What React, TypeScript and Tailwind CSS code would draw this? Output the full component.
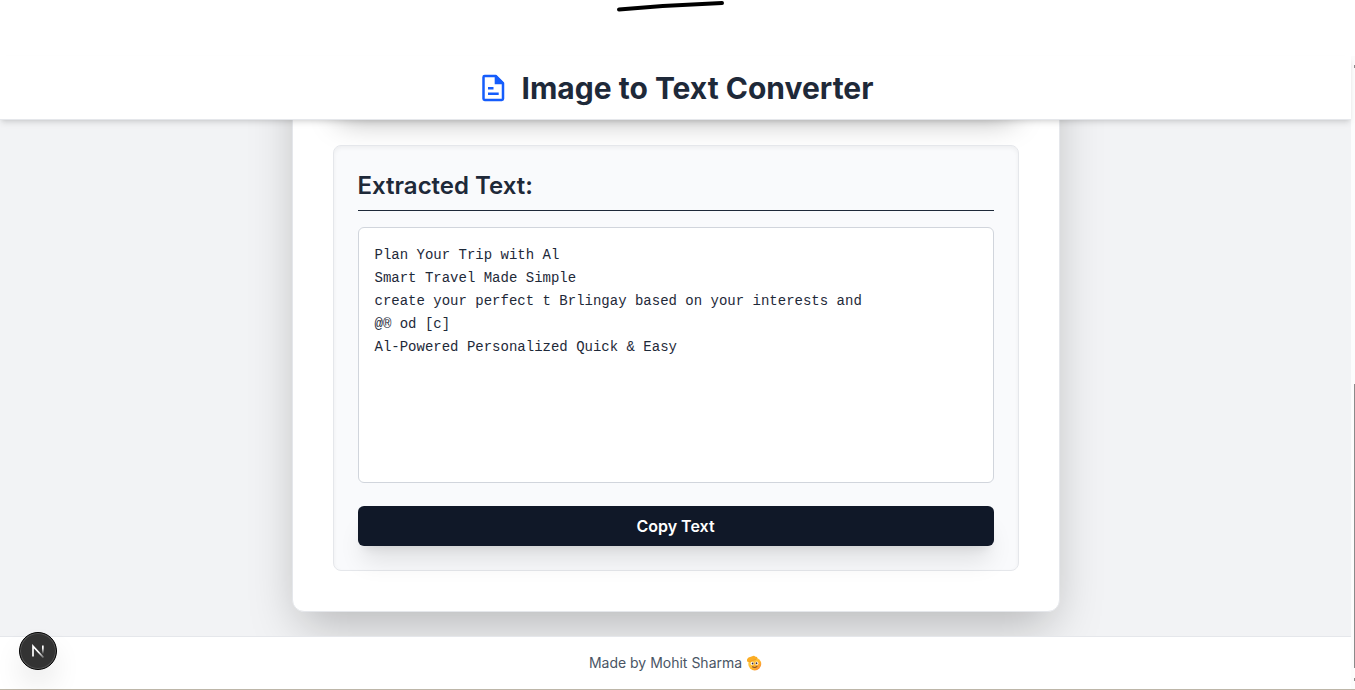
import React, { useState } from "react";

const EXTRACTED = [
  "Plan Your Trip with Al",
  "Smart Travel Made Simple",
  "create your perfect t Brlingay based on your interests and",
  "@® od [c]",
  "Al-Powered Personalized Quick & Easy",
].join("\n");

function DocumentIcon() {
  return (
    <svg width="24" height="28" viewBox="0 0 24 28" aria-hidden="true" className="shrink-0">
      <path
        d="M2.7 2H13.7L21 9.2V24.8Q21 26 19.8 26H2.7Q1.5 26 1.5 24.8V3.2Q1.5 2 2.7 2Z"
        fill="none"
        stroke="#155dfc"
        strokeWidth="2.5"
        strokeLinejoin="round"
      />
      <path d="M12.7 1.5H14.3L21.5 8.8V10.2H12.7Z" fill="#155dfc" />
      <path d="M6 14.2H11.5M6 19.7H16.7" stroke="#155dfc" strokeWidth="2.4" />
    </svg>
  );
}

function SaluteEmoji() {
  return (
    <svg width="16" height="16" viewBox="0 0 32 32" role="img" aria-label="Saluting face">
      <defs>
        <linearGradient id="face" x1="0" y1="0" x2="1" y2="1">
          <stop offset="0" stopColor="#ffd84f" />
          <stop offset="0.6" stopColor="#ffb52e" />
          <stop offset="1" stopColor="#f57c3c" />
        </linearGradient>
      </defs>
      <circle cx="17.5" cy="18" r="13" fill="url(#face)" />
      <path d="M2 12Q1 7 5 5L14 2Q17 1 18 3L22 4Q24 6 21 8L11 12Q7 15 3 13.5Z" fill="#fbad24" />
      <path d="M6 14Q13 11 21 8.5" stroke="#e78a22" strokeWidth="1.2" fill="none" />
      <ellipse cx="12.5" cy="17" rx="3.2" ry="3.4" fill="#fff" />
      <ellipse cx="21.5" cy="16.5" rx="3.2" ry="3.4" fill="#fff" />
      <circle cx="13.2" cy="17" r="1.8" fill="#402a32" />
      <circle cx="21" cy="16.5" r="1.8" fill="#402a32" />
      <path d="M13 24Q18 26.5 22 23.5" stroke="#6b3a2c" strokeWidth="2" fill="none" strokeLinecap="round" />
    </svg>
  );
}

function DevBadge() {
  return (
    <button
      type="button"
      aria-label="Open developer tools"
      className="fixed bottom-5 left-[19px] z-20 flex size-[38px] items-center justify-center rounded-full border border-black bg-[#333333] shadow-[inset_0_0_0_1px_#555555,0_16px_32px_-8px_rgba(0,0,0,0.24)]"
    >
      <svg width="14" height="14" viewBox="0 0 14 14" fill="none" aria-hidden="true">
        <defs>
          <linearGradient id="stem" x1="0" y1="0" x2="0" y2="1">
            <stop offset="0.3" stopColor="#fff" />
            <stop offset="1" stopColor="#fff" stopOpacity="0" />
          </linearGradient>
          <linearGradient id="diagonal" gradientUnits="userSpaceOnUse" x1="8" y1="8" x2="13" y2="14">
            <stop offset="0" stopColor="#fff" />
            <stop offset="1" stopColor="#fff" stopOpacity="0.2" />
          </linearGradient>
        </defs>
        <path d="M2 12.5V2.2L12.5 13.5" stroke="url(#diagonal)" strokeWidth="1.7" />
        <rect x="11" y="1.5" width="1.7" height="8.5" fill="url(#stem)" />
      </svg>
    </button>
  );
}

function ScrollRail() {
  return (
    <div aria-hidden="true" className="flex w-1 shrink-0 flex-col items-end bg-[#fcfcfc] pt-[9px] pb-2">
      <span className="h-[3px] w-px bg-[#8b8b8b]" />
      <span className="grow" />
      <span className="h-[284px] w-px bg-[#8b8b8b]" />
      <span className="mt-[10px] h-[3px] w-px bg-[#8b8b8b]" />
    </div>
  );
}

export default function App() {
  const [text, setText] = useState(EXTRACTED);

  return (
    <div className="flex min-h-screen flex-col border-b border-[#bdb6a8] bg-white font-[Inter,sans-serif]">
      <div className="flex h-14 shrink-0 justify-center pr-4">
        <svg width="120" height="14" viewBox="0 0 120 14" aria-hidden="true">
          <path d="M9 9.5Q60 5 112 3" stroke="#000" strokeWidth="4" strokeLinecap="round" fill="none" />
        </svg>
      </div>

      <div className="flex grow">
        <div className="flex min-w-0 grow flex-col">
          <header className="z-10 flex h-16 items-center justify-center gap-4 border-b border-gray-200 bg-white pl-1 shadow-md">
            <DocumentIcon />
            <h1 className="text-3xl font-bold text-[#1e2939]">Image to Text Converter</h1>
          </header>

          <main className="flex grow justify-center overflow-hidden bg-[#f2f3f5] px-4 pb-6">
            <section className="-mt-20 w-full max-w-3xl rounded-xl border border-gray-200 bg-white p-10 pt-8 shadow-[0_20px_50px_-8px_rgba(0,0,0,0.26)]">
              <div className="h-10 rounded-lg bg-white shadow-[0_14px_30px_-6px_rgba(0,0,0,0.28)]" />
              <div className="mt-8 rounded-lg border border-gray-200 bg-[#f9fafc] p-6 shadow-inner">
                <h2 className="mb-4 border-b border-[#1e2939] pb-2 text-2xl font-semibold text-[#1e2939]">
                  <label htmlFor="extracted">Extracted Text:</label>
                </h2>
                <textarea
                  id="extracted"
                  spellCheck={false}
                  value={text}
                  onChange={(e) => setText(e.target.value)}
                  className="mb-[23px] block h-64 w-full resize-none rounded-md border border-gray-300 bg-white p-4 font-['Liberation_Mono',monospace] text-sm leading-[23px] text-[#1e2939] outline-none"
                />
                <button
                  type="button"
                  onClick={() => navigator.clipboard?.writeText(text)}
                  className="block h-10 w-full rounded-md bg-[#101828] text-base font-semibold text-white shadow-xl"
                >
                  Copy Text
                </button>
              </div>
            </section>
          </main>

          <footer className="z-10 flex h-[53px] items-center justify-center gap-1 border-t border-gray-200 bg-white text-sm text-gray-600">
            <p>Made by Mohit Sharma</p>
            <SaluteEmoji />
          </footer>
        </div>
        <ScrollRail />
      </div>

      <DevBadge />
    </div>
  );
}
